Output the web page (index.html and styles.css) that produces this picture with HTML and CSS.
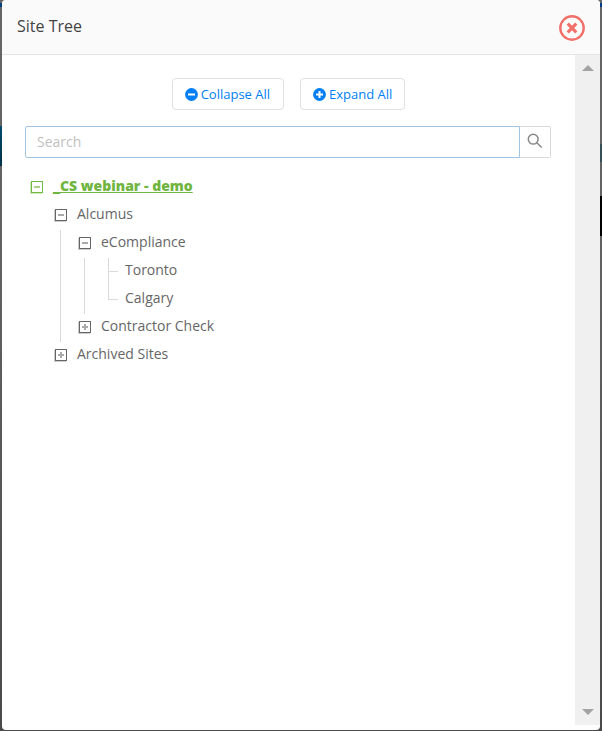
FILE: index.html
```html
<!DOCTYPE html>
<html lang="en">
<head>
<meta charset="utf-8">
<title>Site Tree</title>
<link rel="stylesheet" href="styles.css">
</head>
<body>
<div class="modal">
  <header class="header">
    <h1 class="title">Site Tree</h1>
    <svg class="close" width="26" height="26" viewBox="0 0 26 26"><circle cx="13" cy="13" r="11.7"/><path d="M8.7 8.7l8.6 8.6M17.3 8.7l-8.6 8.6"/></svg>
  </header>
  <div class="body">
    <main class="content">
      <div class="actions">
        <button class="btn collapse"><svg width="13" height="13" viewBox="0 0 13 13"><circle cx="6.5" cy="6.5" r="6.4"/><path d="M3 6.5h7"/></svg>Collapse All</button>
        <button class="btn"><svg width="13" height="13" viewBox="0 0 13 13"><circle cx="6.5" cy="6.5" r="6.4"/><path d="M3 6.5h7M6.5 3v7"/></svg>Expand All</button>
      </div>
      <div class="search">
        <input class="field" type="text" placeholder="Search">
        <button class="go" aria-label="Search"><svg width="16" height="16" viewBox="0 0 16 16"><circle cx="6.2" cy="6.2" r="4.9"/><path d="M9.8 9.8l5 4.7"/></svg></button>
      </div>
      <ul class="tree">
        <li>
          <div class="row root"><i class="toggle"></i><span>_CS webinar - demo</span></div>
          <ul>
            <li class="guide">
              <div class="row"><i class="toggle"></i><span>Alcumus</span></div>
              <ul>
                <li class="guide">
                  <div class="row"><i class="toggle"></i><span>eCompliance</span></div>
                  <ul>
                    <li class="leaf"><div class="row"><span>Toronto</span></div></li>
                    <li class="leaf last"><div class="row"><span>Calgary</span></div></li>
                  </ul>
                </li>
                <li><div class="row"><i class="toggle plus"></i><span>Contractor Check</span></div></li>
              </ul>
            </li>
            <li><div class="row"><i class="toggle plus"></i><span>Archived Sites</span></div></li>
          </ul>
        </li>
      </ul>
    </main>
    <div class="scrollbar"><i class="up"></i><i class="down"></i></div>
  </div>
</div>
</body>
</html>
```
FILE: styles.css
```css
* { box-sizing: border-box; }
body {
  margin: 0;
  height: 731px;
  padding: 0 2px 1px;
  overflow: hidden;
  font-family: "Open Sans", sans-serif;
  background:
    linear-gradient(#004b6b, #003249) 0 126px / 2px 40px no-repeat,
    linear-gradient(#003f86, #003f86) 0 3px / 602px 4px no-repeat,
    linear-gradient(#000, #000) 600px 196px / 2px 40px no-repeat,
    linear-gradient(#344f56, #344f56) 600px 144px / 2px 18px no-repeat,
    linear-gradient(#666 0, #606060 300px, #4a4a4a 731px);
}
.modal {
  height: 730px;
  display: flex;
  flex-direction: column;
  background: #fff;
  border-radius: 4px;
  overflow: hidden;
}
.header {
  height: 55px;
  flex: none;
  display: flex;
  justify-content: space-between;
  padding: 15px 15px 0;
  background: #fafafa;
  border-bottom: 1px solid #e5e5e5;
}
.title {
  margin: 0;
  font-size: 16px;
  line-height: 22px;
  font-weight: 400;
  color: #444;
}
.close { fill: none; stroke: #f0706a; stroke-width: 2.4; }
.close path { stroke-width: 3.2; }
.body { flex: 1; display: flex; }
.content { flex: 1; padding: 23px 24px 0 23px; }
.actions { display: flex; justify-content: center; gap: 16px; padding-left: 1px; }
.btn {
  height: 32px;
  display: flex;
  align-items: center;
  gap: 3px;
  padding: 0 12px;
  font: 13px/18px "Open Sans", sans-serif;
  color: #0080f6;
  background: #fff;
  border: 1px solid #e0e0e0;
  border-radius: 4px;
}
.collapse { padding-right: 13px; }
.btn svg { fill: #007ff5; stroke: #fff; stroke-width: 2; }
.btn circle { stroke: none; }
.search { display: flex; margin-top: 16px; height: 32px; }
.field {
  width: 495px;
  padding: 0 11px;
  font: 14px/20px "Open Sans", sans-serif;
  border: 1px solid #a2c4e3;
  border-radius: 2px 0 0 2px;
  outline: 0;
}
.field::placeholder { color: #bfbfbf; }
.go {
  width: 31px;
  padding: 0 0 2px;
  display: flex;
  align-items: center;
  justify-content: center;
  background: #fff;
  border: 1px solid #d9d9d9;
  border-left: 0;
  border-radius: 0 2px 2px 0;
}
.go svg { fill: none; stroke: #888; stroke-width: 1.5; }
ul { list-style: none; margin: 0; padding: 0 0 0 24px; }
.tree { margin-top: 14px; padding: 0; }
li { position: relative; }
.row {
  height: 28px;
  display: flex;
  align-items: center;
  padding-left: 6px;
  font-size: 14px;
  line-height: 20px;
  color: #666;
}
.toggle {
  width: 12px;
  height: 12px;
  margin: 2px 10px 0 0;
  border: 1px solid #666;
  box-shadow: -1px 1px 0 #ccc;
  background: linear-gradient(#aaa, #aaa) center / 6px 2px no-repeat;
}
.toggle.plus {
  background:
    linear-gradient(#aaa, #aaa) center / 6px 2px no-repeat,
    linear-gradient(#aaa, #aaa) center / 2px 6px no-repeat;
}
.root { color: #6fb53f; }
.root span { font-weight: 800; text-decoration: underline; }
.root .toggle {
  border-color: #72b944;
  box-shadow: -1px 1px 0 #d0e8c0;
  background-image: linear-gradient(#a8d48a, #a8d48a);
}
.guide::before {
  content: "";
  position: absolute;
  left: 11px;
  top: 30px;
  bottom: -2px;
  border-left: 1px solid #d9d9d9;
}
.leaf .row { padding-left: 28px; }
.leaf::before {
  content: "";
  position: absolute;
  left: 11px;
  top: 0;
  bottom: 0;
  border-left: 1px solid #d9d9d9;
}
.leaf:first-child::before { top: 2px; }
.leaf.last::before { bottom: 12px; }
.leaf::after {
  content: "";
  position: absolute;
  left: 11px;
  top: 15px;
  width: 10px;
  border-top: 1px solid #d9d9d9;
}
.scrollbar {
  width: 25px;
  height: 670px;
  display: flex;
  flex-direction: column;
  justify-content: space-between;
  align-items: center;
  padding: 10px 0;
  background: #f0f0f0;
}
.up, .down { border: 6px solid transparent; }
.up { border-top: 0; border-bottom-color: #a3a3a3; }
.down { border-bottom: 0; border-top-color: #a3a3a3; }
```
